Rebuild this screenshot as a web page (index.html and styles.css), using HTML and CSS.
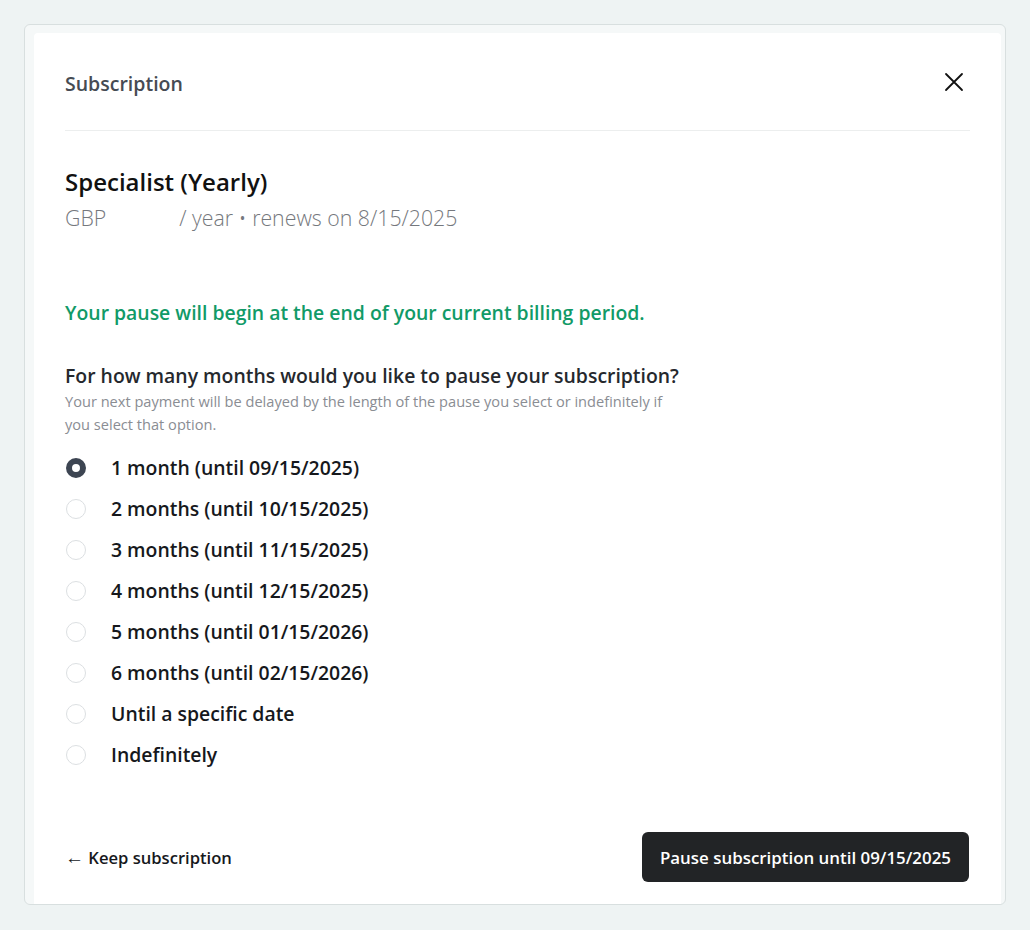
FILE: index.html
```html
<!DOCTYPE html>
<html lang="en">
<head>
  <meta charset="UTF-8">
  <meta name="viewport" content="width=device-width, initial-scale=1.0">
  <title>Pause subscription</title>
  <link rel="stylesheet" href="styles.css">
</head>
<body>
  <div class="frame">
    <div class="card">
      <header class="card-head">
        <h1>Subscription</h1>
        <button class="close" aria-label="Close">
          <svg width="20" height="20" viewBox="0 0 20 20" fill="none" stroke="#111" stroke-width="1.8" stroke-linecap="round">
            <path d="M2 2 L18 18 M18 2 L2 18"/>
          </svg>
        </button>
      </header>

      <section class="plan">
        <h2>Specialist (Yearly)</h2>
        <p class="plan-meta"><span class="currency">GBP</span><span class="price"></span>/ year &bull; renews on 8/15/2025</p>
      </section>

      <p class="notice">Your pause will begin at the end of your current billing period.</p>

      <form class="pause-form">
        <h3>For how many months would you like to pause your subscription?</h3>
        <p class="hint">Your next payment will be delayed by the length of the pause you select or indefinitely if you select that option.</p>

        <div class="options">
          <label class="option"><input type="radio" name="months" checked><span>1 month (until 09/15/2025)</span></label>
          <label class="option"><input type="radio" name="months"><span>2 months (until 10/15/2025)</span></label>
          <label class="option"><input type="radio" name="months"><span>3 months (until 11/15/2025)</span></label>
          <label class="option"><input type="radio" name="months"><span>4 months (until 12/15/2025)</span></label>
          <label class="option"><input type="radio" name="months"><span>5 months (until 01/15/2026)</span></label>
          <label class="option"><input type="radio" name="months"><span>6 months (until 02/15/2026)</span></label>
          <label class="option"><input type="radio" name="months"><span>Until a specific date</span></label>
          <label class="option"><input type="radio" name="months"><span>Indefinitely</span></label>
        </div>

        <div class="actions">
          <a href="#" class="back"><span class="arrow">&larr;</span> Keep subscription</a>
          <button type="submit" class="primary">Pause subscription until 09/15/2025</button>
        </div>
      </form>
    </div>
  </div>
</body>
</html>
```

FILE: styles.css
```css
/* Page */
body {
  margin: 0;
  padding: 24px 24px 0 24px;
  background: #eef3f3;
  font-family: 'Open Sans', 'Noto Sans', sans-serif;
  color: #1b1d21;
}
.frame {
  height: 871px;
  overflow: hidden;
  background: #f5f8f8;
  border: 1px solid #d8dfdf;
  border-radius: 6px;
  padding: 8px 4px 0 9px;
}
.card {
  height: 100%;
  background: #fff;
  border-radius: 4px 4px 0 0;
  padding: 0 31px;
}

/* Header */
.card-head {
  height: 97px;
  display: flex;
  align-items: center;
  justify-content: space-between;
  border-bottom: 1px solid #eceeee;
}
.card-head h1 {
  margin: 4px 0 0;
  font-size: 19.5px;
  font-weight: 600;
  color: #464b53;
}
.close {
  background: none;
  border: none;
  padding: 0;
  margin: 0 6px 0 0;
  cursor: pointer;
  display: flex;
}

/* Plan */
.plan {
  padding-top: 35px;
}
.plan h2 {
  margin: 0;
  font-size: 24px;
  line-height: 32px;
  font-weight: 600;
  color: #111;
}
.plan-meta {
  margin: 6px 0 0;
  font-size: 21.3px;
  line-height: 28px;
  font-weight: 300;
  color: #75787d;
}
.price {
  display: inline-block;
  width: 73px;
}

.notice {
  margin: 67px 0 0;
  font-size: 19.4px;
  line-height: 28px;
  font-weight: 600;
  color: #119a67;
}

/* Form */
.pause-form h3 {
  margin: 35px 0 0;
  font-size: 19.4px;
  line-height: 28px;
  font-weight: 600;
  color: #25282d;
}
.hint {
  margin: 0;
  max-width: 610px;
  font-size: 14.6px;
  line-height: 23px;
  color: #8a8d93;
}
.options {
  margin-top: 11px;
  display: flex;
  flex-direction: column;
}
.option {
  height: 41px;
  display: flex;
  align-items: center;
  gap: 25px;
  font-size: 19.4px;
  font-weight: 600;
  color: #16181c;
  cursor: pointer;
}
.option input {
  appearance: none;
  margin: 0 0 0 1px;
  width: 20px;
  height: 20px;
  border: 1px solid #dcdfe2;
  border-radius: 50%;
  background: #fff;
}
.option input:checked {
  border: 6.5px solid #3d4552;
}

.actions {
  margin-top: 57px;
  display: flex;
  align-items: center;
  justify-content: space-between;
}
.back {
  font-size: 16.6px;
  font-weight: 600;
  color: #16181c;
  text-decoration: none;
}
.back .arrow {
  font-size: 19px;
  font-weight: 400;
}
.primary {
  height: 50px;
  margin-right: 1px;
  padding: 0 18px;
  background: #222426;
  color: #fff;
  border: none;
  border-radius: 6px;
  font-family: inherit;
  font-size: 16.9px;
  font-weight: 600;
  cursor: pointer;
}
```
